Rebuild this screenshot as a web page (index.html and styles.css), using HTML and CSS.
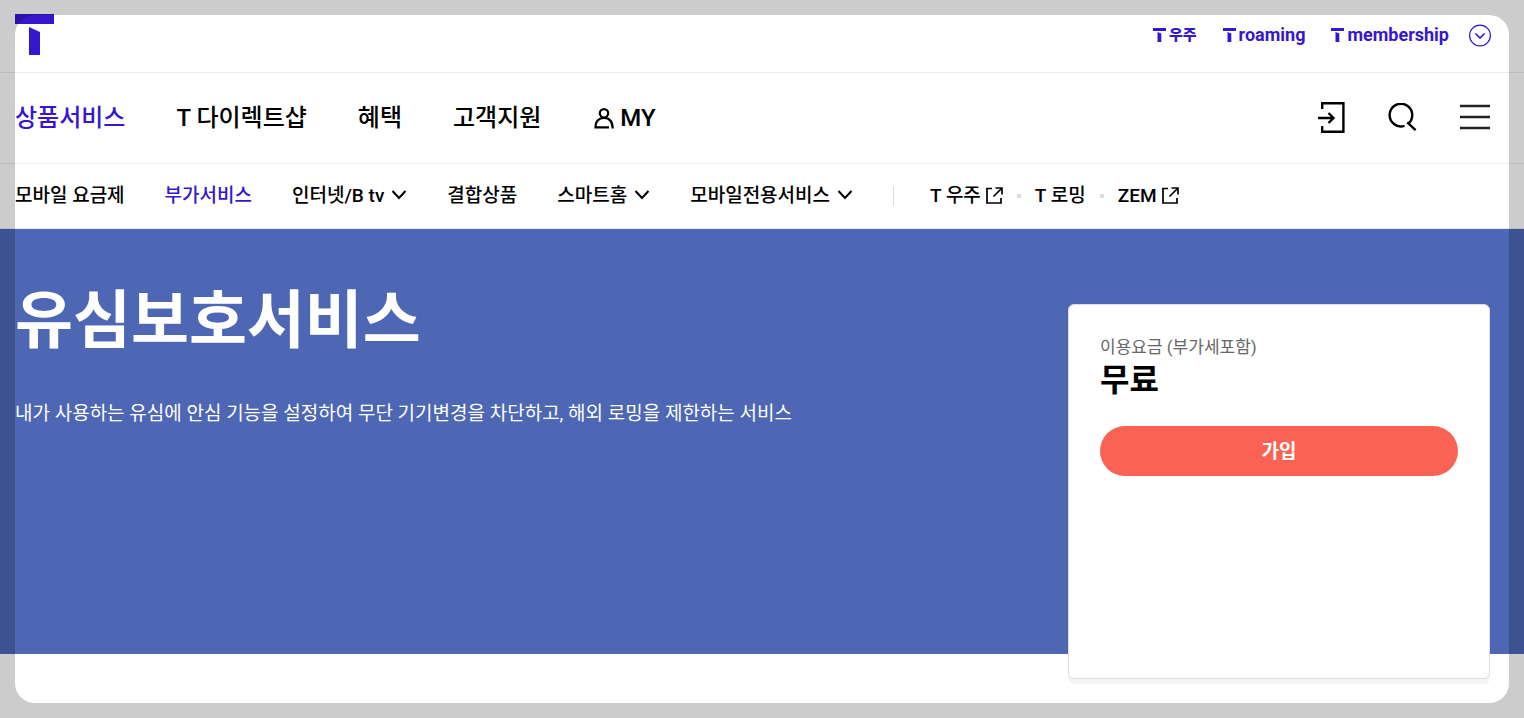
FILE: index.html
```html
<!DOCTYPE html>
<html lang="ko">
<head>
    <meta charset="UTF-8">
    <meta name="viewport" content="width=device-width, initial-scale=1.0">
    <title>유심보호서비스</title>
    <link rel="stylesheet" href="styles.css">
</head>
<body>
    <svg class="sprite" width="0" height="0" aria-hidden="true">
        <symbol id="t-mark" viewBox="0 0 39 41">
            <path d="M0 0h39v10H0zM14 13l11 5v23H14z"/>
        </symbol>
        <symbol id="t-small" viewBox="0 0 13 14">
            <path d="M0 0h13v3H0zM4.500 4l3.800 1.500V14H4.500z"/>
        </symbol>
        <symbol id="chevron" viewBox="0 0 16 10">
            <path d="M1.500 1l6.500 7 6.500-7" fill="none" stroke="currentColor" stroke-width="2"/>
        </symbol>
        <symbol id="external" viewBox="0 0 17 17">
            <path d="M6 1.500H1v14.500h14v-5M9.500 1h6.500v6.500M16 1L7.500 9.500" fill="none" stroke="currentColor" stroke-width="1.700"/>
        </symbol>
    </svg>

    <header>
        <div class="top-bar">
            <a class="logo" href="#" aria-label="T world">
                <svg width="39" height="41"><use href="#t-mark"/></svg>
            </a>
            <div class="family">
                <a class="family-link universe" href="#"><svg width="13" height="14"><use href="#t-small"/></svg>우주</a>
                <a class="family-link" href="#"><svg width="13" height="14"><use href="#t-small"/></svg>roaming</a>
                <a class="family-link" href="#"><svg width="13" height="14"><use href="#t-small"/></svg>membership</a>
                <button class="family-more" type="button" aria-label="더보기">
                    <svg width="22" height="23" viewBox="0 0 22 23" fill="none" stroke="currentColor">
                        <circle cx="11" cy="11.500" r="10.400" stroke-width="1.200"/>
                        <path d="M6.500 9.500l4.500 4.500 4.500-4.500" stroke-width="1.600"/>
                    </svg>
                </button>
            </div>
        </div>

        <div class="main-bar">
            <nav class="main-nav">
                <a class="active" href="#">상품서비스</a>
                <a href="#">T 다이렉트샵</a>
                <a href="#">혜택</a>
                <a href="#">고객지원</a>
                <a class="my" href="#">
                    <svg width="20" height="21" viewBox="0 0 20 21" fill="none" stroke="currentColor" stroke-width="2.200">
                        <circle cx="10" cy="5.300" r="4.200"/>
                        <path d="M15 19.400H1.500C1.500 13 5 9.800 10 9.800s8.500 3.200 8.700 10.700"/>
                    </svg>MY
                </a>
            </nav>
            <div class="tools">
                <button type="button" aria-label="로그인">
                    <svg width="27" height="31" viewBox="0 0 27 31" fill="none" stroke="currentColor" stroke-width="2.400">
                        <path d="M4.200 7V1.200H25.400V29.800H4.200V24M0 16h15.500M10.500 11l5 5-5 5"/>
                    </svg>
                </button>
                <button type="button" aria-label="검색">
                    <svg width="29" height="29" viewBox="0 0 29 29" fill="none" stroke="currentColor" stroke-width="2.400">
                        <path d="M16.500 22.800A11.300 11.300 0 1 1 20 20.900"/>
                        <path d="M19.300 19.300l8.300 7.900"/>
                    </svg>
                </button>
                <button type="button" aria-label="전체메뉴">
                    <svg width="30" height="26" viewBox="0 0 30 26" stroke="#222" stroke-width="2.400">
                        <path d="M0 2h30M0 13h30M0 24h30"/>
                    </svg>
                </button>
            </div>
        </div>

        <nav class="sub-nav">
            <a href="#">모바일 요금제</a>
            <a class="active" href="#">부가서비스</a>
            <a href="#">인터넷/B tv<svg width="16" height="10"><use href="#chevron"/></svg></a>
            <a href="#">결합상품</a>
            <a href="#">스마트홈<svg width="16" height="10"><use href="#chevron"/></svg></a>
            <a href="#">모바일전용서비스<svg width="16" height="10"><use href="#chevron"/></svg></a>
            <div class="outlinks">
                <a href="#">T 우주<svg width="17" height="17"><use href="#external"/></svg></a>
                <a href="#">T 로밍</a>
                <a href="#">ZEM<svg width="17" height="17"><use href="#external"/></svg></a>
            </div>
        </nav>
    </header>

    <main class="hero">
        <div class="hero-text">
            <h1>유심보호서비스</h1>
            <p>내가 사용하는 유심에 안심 기능을 설정하여 무단 기기변경을 차단하고, 해외 로밍을 제한하는 서비스</p>
        </div>
        <section class="price-card">
            <p class="price-label">이용요금 (부가세포함)</p>
            <strong class="price">무료</strong>
            <button class="join" type="button">가입</button>
        </section>
    </main>
</body>
</html>
```
FILE: styles.css
```css
* {
    box-sizing: border-box;
}

body {
    margin: 0;
    min-height: 100vh;
    background: #fff;
    color: #000;
    font-family: Roboto, "Noto Sans CJK KR", sans-serif;
}

/* dimmed frame around the viewport */
body::after {
    content: "";
    position: fixed;
    inset: 15px;
    border-radius: 20px;
    box-shadow: 0 0 0 40px rgba(0, 0, 0, 0.2);
    pointer-events: none;
}

a {
    color: inherit;
    text-decoration: none;
}

button {
    padding: 0;
    border: 0;
    background: none;
    color: inherit;
    font-family: inherit;
    cursor: pointer;
}

svg {
    display: block;
    flex: none;
}

.sprite {
    position: absolute;
}

.active {
    color: #3617ce;
}

.top-bar,
.main-bar,
.sub-nav {
    display: flex;
    align-items: center;
    padding: 0 34px 0 15px;
    border-bottom: 1px solid #ebebeb;
}

/* top bar */
.top-bar {
    justify-content: space-between;
    height: 73px;
    padding-right: 33px;
    color: #3617ce;
    fill: currentColor;
}

.logo {
    padding-bottom: 3px;
}

.family {
    display: flex;
    align-items: center;
    gap: 26px;
    padding-bottom: 2px;
}

.family-link {
    display: flex;
    align-items: center;
    gap: 3px;
    font-size: 18px;
    font-weight: 700;
    line-height: 20px;
}

.universe {
    font-size: 15px;
    font-weight: 900;
}

.family-more {
    margin-left: -6px;
}

/* main menu */
.main-bar {
    justify-content: space-between;
    height: 91px;
}

.main-nav {
    display: flex;
    gap: 51px;
    font-size: 24px;
    font-weight: 500;
    line-height: 36px;
}

.my {
    display: flex;
    align-items: center;
    gap: 6px;
    padding-left: 2px;
}

.tools {
    display: flex;
    align-items: center;
    gap: 43px;
    padding-bottom: 2px;
}

/* sub menu */
.sub-nav {
    gap: 40px;
    height: 65px;
    font-size: 19px;
    font-weight: 500;
    line-height: 28px;
    white-space: nowrap;
}

.sub-nav a {
    display: flex;
    align-items: center;
    gap: 7px;
}

.sub-nav svg {
    margin-bottom: 2px;
}

.outlinks {
    display: flex;
    align-items: center;
}

.outlinks::before {
    content: "";
    width: 1px;
    height: 20px;
    margin-right: 36px;
    background: #ddd;
}

.outlinks a {
    gap: 5px;
}

.outlinks a + a::before {
    content: "";
    width: 4px;
    height: 4px;
    margin: 0 9px 0 14px;
    background: #ddd;
}

/* hero */
.hero {
    display: flex;
    justify-content: space-between;
    align-items: flex-start;
    padding: 0 34px 0 15px;
    background: #4d67b4;
}

.hero-text {
    padding-top: 46px;
    color: #fff;
}

.hero-text h1 {
    margin: 0;
    font-size: 63px;
    font-weight: 700;
    line-height: 92px;
}

.hero-text p {
    margin: 33px 0 0;
    font-size: 19px;
    line-height: 28px;
}

.price-card {
    display: flex;
    flex-direction: column;
    width: 422px;
    min-height: 375px;
    margin: 75px 0 -25px;
    padding: 29px 31px;
    border: 1px solid #ddd;
    border-radius: 6px;
    background: #fff;
    box-shadow: 0 5px 0 #f4f4f4;
}

.price-label {
    margin: 0;
    color: #666;
    font-size: 17px;
    line-height: 26px;
}

.price {
    font-size: 32px;
    font-weight: 700;
    line-height: 40px;
}

.join {
    height: 50px;
    margin-top: 26px;
    padding-bottom: 3px;
    border-radius: 25px;
    background: #fa6253;
    color: #fff;
    font-size: 19px;
    font-weight: 700;
}
```
